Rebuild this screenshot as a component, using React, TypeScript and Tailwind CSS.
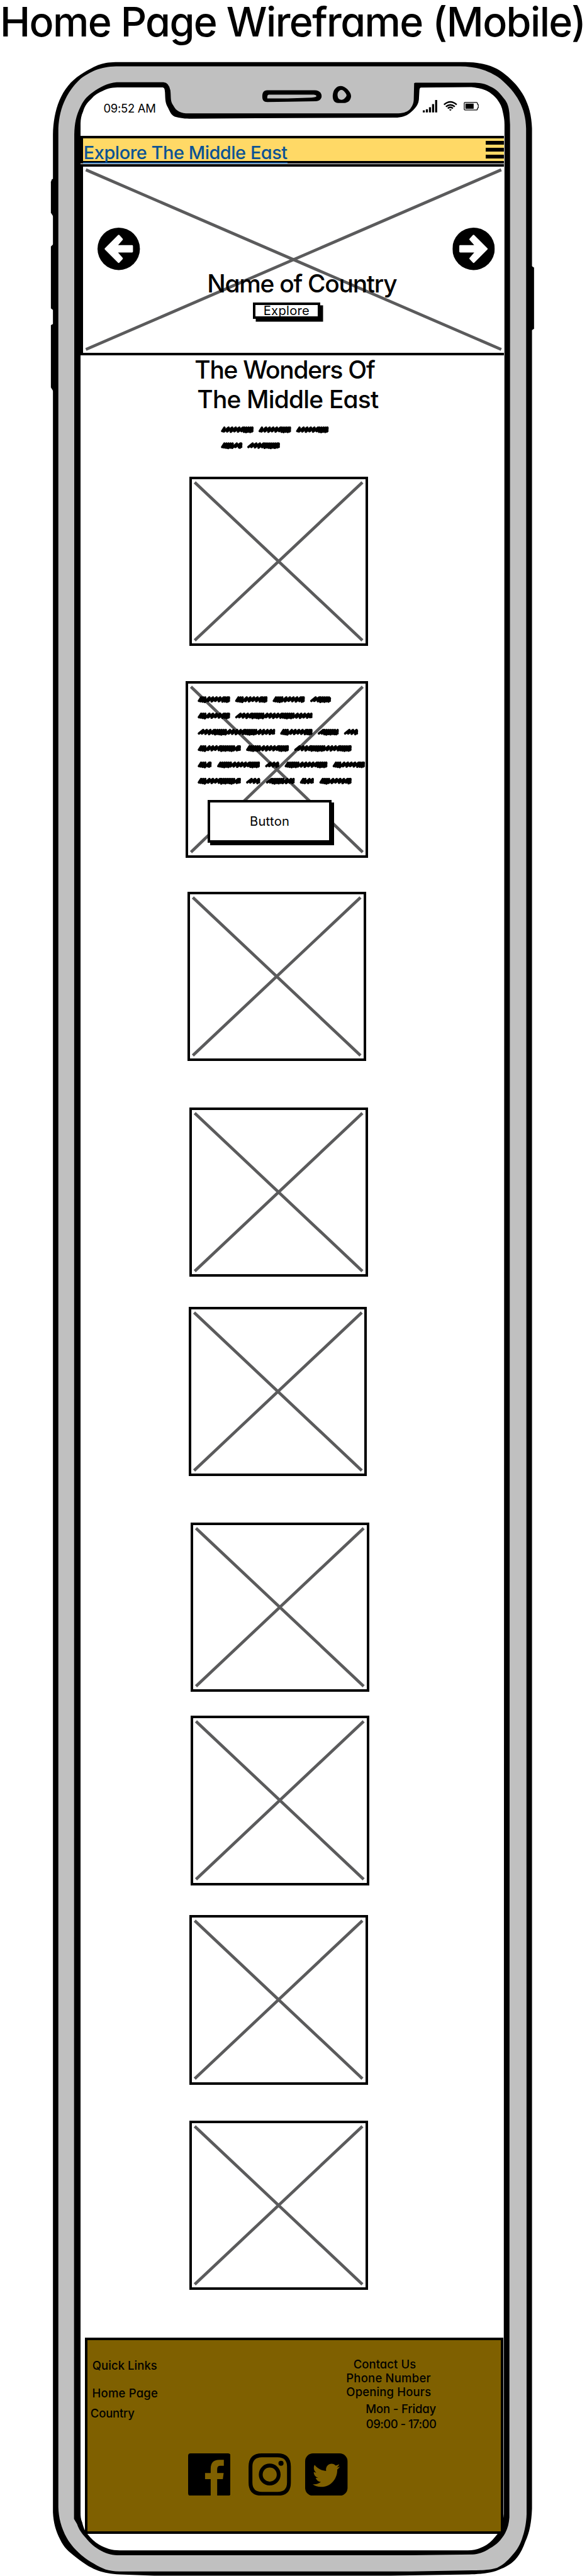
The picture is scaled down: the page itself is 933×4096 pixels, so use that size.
import type { ReactNode } from "react";

const INK = "#000000";

function PhoneFrame() {
  return (
    <svg
      className="absolute inset-0 h-[4096px] w-[933px]"
      viewBox="0 0 1142 5014"
      preserveAspectRatio="none"
      aria-hidden="true"
    >
      {/* side keys */}
      <path d="M104 348 L101 349 L99 354 V414 L104 422 Z" fill={INK} />
      <path d="M104 475 L99 480 V600 L104 604 Z" fill={INK} />
      <path d="M104 630 L99 633 V754 L104 762 Z" fill={INK} />
      <path d="M1033 517 L1039 521 V640 L1033 644 Z" fill={INK} />
      {/* shell */}
      <path
        d="M103 262 C104 215 118 170 157 145 C190 125 200 121 230 121 H905 C940 121 965 130 983 145 C1012 168 1034 200 1035 250 V4883 C1034 4910 1030 4930 1022 4947 C1012 4975 1000 4990 975 5000 C955 5010 930 5010 913 5011 L760 5013.5 H300 L233 5011 C200 5009 180 5002 155 4983 C135 4968 125 4960 117 4943 C108 4925 104 4910 103 4890 Z"
        fill={INK}
      />
      <path
        d="M113.5 257 C113.5 215 128 180 157 153 C180 136 200 129 232 129 H895 C930 129 955 140 973 153 C1005 180 1023 210 1023.5 250 L1024.5 4893 C1024 4910 1021 4925 1017 4937 C1013 4952 1005 4965 997 4973 C988 4984 978 4993 967 4998 C955 5002 935 5003 917 5003 L800 5005 H233 C210 5005 198 4999 183 4990 C160 4978 140 4958 130 4940 C119 4920 114 4900 113.5 4880 Z"
        fill="#c0c0c0"
      />
      {/* screen outline with notch */}
      <path
        d="M144.5 262 C145 240 148 225 157 207 C164 192 172 186 180 180 C195 169 208 162 227 160 H318 Q329 161 331.5 176 C333 190 331 197 337 205 C343 217 352 220.7 367 220.7 H775 C787 220 793 217 798 212 C804 204 805 199 805 191 L805.7 162 L808 161 H920 C935 161 943 163 953 168 C966 173 973 182 983 195 C989 204 990 212 991 220 L992.3 243 V600 L991 4900 C990 4912 988 4921 983 4930 C976 4943 965 4954 953 4960 C943 4967 930 4972 920 4972 L800 4973.7 H233 C220 4973.7 208 4971 197 4965 C185 4959 175 4950 167 4940 C159 4931 153 4923 150 4913 L144 4903 Z"
        fill={INK}
      />
      <path
        d="M156.7 240 C157 232 158 225 161.7 217 C164 208 169 200 177 193 C184 185 192 180 200 177 C210 171 220 170 233 170 H315 C320 170 320.5 173 321 180 C321.7 193 321 200 327 210 C332 221 334 224 340 227 C350 230 360 231 373 231 L500 230 L773 229 C785 228 792 225 800 218 C811 208 814 202 815 193 L816 175 Q816.5 170.7 819 170.5 L917 169.5 C930 171 935 172 943 175 C953 179 960 185 967 193 C973 201 977 209 978 217 C981 230 981.5 235 981.5 243 L980 4893 C979 4910 975 4923 968 4932 C962 4940 955 4948 947 4953 C935 4960 925 4964 910 4964 H233 C218 4964 205 4960 193 4953 C184 4948 177 4941 170 4932 C164 4925 162 4918 160 4910 C157 4903 156.7 4897 156.7 4890 Z"
        fill="#ffffff"
      />
      {/* speaker and camera */}
      <path
        fillRule="evenodd"
        fill={INK}
        d="M520 175.7 H612 C620 175.7 625.7 180 625.7 187 C625.7 193 621 197 613 197 L560 198 L520 198.7 C513 198.7 510.3 195 510.3 188 C510.3 180 513 176 520 175.7 Z M523 184.3 C520 185 520 187 520 191.5 L560 191.5 L606 190 C613 189.500 615.500 188.500 615.500 187 C615.500 185 612 184.300 607 184.300 Z"
      />
      <path
        fillRule="evenodd"
        fill={INK}
        d="M652 173 C658 165 668 166 675 173 C681 179 683 183 683 188 C682 196 677 200 670 200.500 H658 C650 200 647 194 647.300 186 C648 180 649 176 652 173 Z M660 177 C665 173 668 176 672 181 C676 186 674 188 670 192 C667 195.500 660 194.500 658 191 C656 186 656 180 660 177 Z"
      />
    </svg>
  );
}

function StatusIcons() {
  return (
    <svg className="h-[20px] w-[89px]" viewBox="786 255 327 73" aria-hidden="true">
      <path d="M786 315h12v12h-12z M804 309h12v18h-12z M822 297h12v30h-12z M840 279h12v48h-12z M858 255h12v72h-12z" />
      <g fill="none" stroke={INK} strokeWidth="9">
        <path d="M910 282 Q947 250 984 282" />
        <path d="M921 294 Q947 272 973 294" />
        <path d="M932 304 Q947 291 962 304" />
      </g>
      <path d="M939 311 Q947 306 955 311 L947 318 Z" />
      <path
        d="M1032 269 H1100 Q1104 269 1105 274 V279 L1110 282 V300 L1105 303 V309 Q1104 313 1100 313 H1032 Q1028 313 1028 309 V273 Q1028 269 1032 269 Z"
        fill="none"
        stroke={INK}
        strokeWidth="4.5"
      />
      <path d="M1035 276h48v30h-48z" />
    </svg>
  );
}

function ArrowDisc({ flip = false }: { flip?: boolean }) {
  return (
    <svg
      className={flip ? "size-[67.4px] -scale-x-100" : "size-[67.4px]"}
      viewBox="0 0 248 248"
      aria-hidden="true"
    >
      <circle cx="124" cy="124" r="124" />
      <path
        d="M47 124 L124 47 L143 68 L108 108 H202 V140 H108 L143 180 L124 201 Z"
        fill="#fff"
        stroke="#fff"
        strokeWidth="11"
        strokeLinejoin="round"
      />
    </svg>
  );
}

function Cross({ w, h }: { w: number; h: number }) {
  return (
    <svg
      className="absolute inset-0 size-full"
      viewBox={`0 0 ${w} ${h}`}
      preserveAspectRatio="none"
      aria-hidden="true"
    >
      <path
        d={`M4.500 5 L${w - 4.5} ${h - 5} M${w - 4.5} 5 L4.500 ${h - 5}`}
        stroke="#5b5b5c"
        strokeWidth="4.700"
      />
    </svg>
  );
}

function scribblePath(x0: number, x1: number, y: number) {
  const end = x1 - 8;
  let x = x0 + 8;
  let i = 0;
  let d = `M${x} ${y + 7}`;
  while (x < end - 8) {
    const dense = Math.sin((x - x0) / 28 + (x1 - x0) * 0.7) > 0.1;
    const top = y - 13 + ((i * 5) % 5);
    const low = y + 7 + ((i * 7) % 5) + (dense ? 2 : 0);
    x += Math.min(dense ? 13 : 25, end - x);
    d += ` L${x} ${top} L${x - (dense ? 3 : 8)} ${low}`;
    x -= dense ? 1 : 4;
    i += 1;
  }
  return `${d} L${end} ${y - 8} L${end - 2} ${y + 6} H${end}`;
}

function Scribbles({
  rows,
  pitch,
  className,
}: {
  rows: [number, number][][];
  pitch: number;
  className: string;
}) {
  return (
    <svg className={className} viewBox={`0 0 980 ${pitch * rows.length}`} aria-hidden="true">
      {rows.map((row, r) =>
        row.map(([a, b]) => (
          <path
            key={`${r}-${a}`}
            d={scribblePath(a, b, r * pitch + 24)}
            fill="none"
            stroke={INK}
            strokeWidth="14"
            strokeLinecap="round"
            strokeLinejoin="round"
          />
        )),
      )}
    </svg>
  );
}

const introRows: [number, number][][] = [
  [[0, 192], [219, 411], [438, 630]],
  [[0, 127], [153, 346]],
];

const cardRows: [number, number][][] = [
  [[0, 191], [218, 409], [437, 627], [656, 780]],
  [[0, 191], [218, 672]],
  [[0, 454], [481, 672], [700, 825], [853, 938]],
  [[0, 254], [282, 534], [563, 900]],
  [[0, 83], [113, 365], [393, 478], [507, 759], [787, 978]],
  [[0, 254], [282, 367], [398, 568], [596, 680], [710, 900]],
];

function ImageBox({ className }: { className: string }) {
  return (
    <div className={`relative h-[269.2px] w-[283.5px] border-4 border-black ${className}`}>
      <Cross w={275.5} h={261.2} />
    </div>
  );
}

function SketchButton({ className, children }: { className: string; children: ReactNode }) {
  return (
    <button
      className={`relative flex items-center justify-center border-4 border-black bg-white text-[20.2px] leading-none tracking-[0.25px] ${className}`}
    >
      {children}
    </button>
  );
}

function FacebookMark() {
  return (
    <svg className="size-[67.4px]" viewBox="0 0 248 248" aria-hidden="true">
      <path d="M14 0 H234 Q248 0 248 14 V234 Q248 248 234 248 H170 V151 H203 L208 115 H170 V92 Q170 73 188 73 H209 V38 H182 Q132 38 132 90 V115 H99 V151 H132 V248 H14 Q0 248 0 234 V14 Q0 0 14 0 Z" />
    </svg>
  );
}

function InstagramMark() {
  return (
    <svg className="size-[67.4px]" viewBox="0 0 248 248" fill="none" stroke={INK} strokeWidth="22.500" aria-hidden="true">
      <path d="M78 11.500 H170 Q236.500 11.500 236.500 78 V170 Q236.500 236.500 170 236.500 H78 Q11.500 236.500 11.500 170 V78 Q11.500 11.500 78 11.500 Z" />
      <circle cx="124" cy="124" r="52.500" />
      <circle cx="190" cy="58" r="15" fill={INK} stroke="none" />
    </svg>
  );
}

function TwitterMark() {
  return (
    <svg className="size-[67.4px]" viewBox="0 0 248 248" aria-hidden="true">
      <rect width="248" height="248" rx="46" />
      <path
        transform="translate(44 45.500) scale(.3125 .325)"
        fill="#7f6000"
        d="M459.370 151.716c.325 4.548.325 9.097.325 13.645 0 138.720-105.583 298.558-298.558 298.558-59.452 0-114.680-17.219-161.137-47.106 8.447.974 16.568 1.299 25.340 1.299 49.055 0 94.213-16.568 130.274-44.832-46.132-.975-84.792-31.188-98.112-72.772 6.498.974 12.995 1.624 19.818 1.624 9.421 0 18.843-1.300 27.614-3.573-48.081-9.747-84.143-51.980-84.143-102.985v-1.299c13.969 7.797 30.214 12.670 47.431 13.319-28.264-18.843-46.781-51.005-46.781-87.391 0-19.492 5.197-37.360 14.294-52.954 51.655 63.675 129.300 105.258 216.365 109.807-1.624-7.797-2.599-15.918-2.599-24.040 0-57.828 46.782-104.934 104.934-104.934 30.213 0 57.502 12.670 76.670 33.137 23.715-4.548 46.456-13.320 66.599-25.340-7.798 24.366-24.366 44.833-46.132 57.827 21.117-2.273 41.584-8.122 60.426-16.243-14.292 20.791-32.161 39.308-52.628 54.253z"
      />
    </svg>
  );
}

export default function App() {
  return (
    <div className="relative h-[4096px] w-[933px] overflow-hidden bg-white font-['Inter','Open_Sans',sans-serif] text-black [font-feature-settings:'cv11']">
      <PhoneFrame />

      <div className="relative">
        <div className="flex h-[215.7px] flex-col pt-[3px]">
          <h1 className="text-[64.6px] leading-none font-medium tracking-[-1.6px] whitespace-nowrap">
            Home Page Wireframe (Mobile)
          </h1>
          <div className="mt-[91px] flex justify-between pr-[172px] pl-[164.5px]">
            <span className="mt-[4.500px] text-[18.4px] leading-none tracking-[-0.25px]">09:52 AM</span>
            <StatusIcons />
          </div>
        </div>

        <main className="ml-[128.3px] w-[673.2px]">
          <header className="flex h-[44.3px] items-start justify-between border-y-4 border-l-4 border-black bg-[#ffd966]">
            <a className="mt-[8.4px] ml-[-0.5px] h-[31.7px] border-b-[2.500px] border-[#0b5394] pt-[0.600px] pl-[1px] text-[28.9px] leading-none font-medium tracking-[-0.45px] whitespace-nowrap text-[#0b5394]">
              Explore The Middle East
            </a>
            <div className="mt-[4.500px] flex w-[29.5px] flex-col gap-[5.200px]">
              <span className="h-[5.700px] bg-black" />
              <span className="h-[5.700px] bg-black" />
              <span className="h-[5.700px] bg-black" />
            </div>
          </header>

          <section className="relative mt-[1.400px] h-[303.7px] border-y-4 border-l-4 border-black bg-white">
            <Cross w={669.2} h={295.7} />
            <div className="relative flex justify-between pt-[96.800px] pr-[15px] pl-[23px]">
              <ArrowDisc />
              <ArrowDisc flip />
            </div>
            <h2 className="relative mt-[2.900px] ml-[197px] text-[38.9px] leading-none font-medium tracking-[-1.26px] whitespace-nowrap">
              Name of Country
            </h2>
            <SketchButton className="mt-[9.500px] ml-[269.300px] h-[26px] w-[107.6px] shadow-[4.500px_4.500px_0_#000]">
              Explore
            </SketchButton>
          </section>

          <h2 className="text-[38.9px] leading-[46.7px] font-medium whitespace-nowrap">
            <span className="ml-[181px] block tracking-[-1.26px]">The Wonders Of</span>
            <span className="ml-[185px] block tracking-[-0.8px]">The Middle East</span>
          </h2>

          <Scribbles
            rows={introRows}
            pitch={93}
            className="mt-[18.500px] ml-[223px] h-[50.7px] w-[267px]"
          />

          <ImageBox className="mt-[30.200px] ml-[173.2px]" />

          <article className="relative mt-[55.900px] ml-[166.7px] h-[281px] w-[290px] border-4 border-black">
            <Cross w={282} h={273} />
            <Scribbles
              rows={cardRows}
              pitch={95.2}
              className="relative mt-[19.500px] ml-[15.500px] h-[155.600px] w-[267px]"
            />
            <SketchButton className="mt-[9.900px] ml-[31px] h-[68px] w-[197.2px] shadow-[4px_4px_0_#000]">
              Button
            </SketchButton>
          </article>

          <ImageBox className="mt-[54px] ml-[169.900px]" />
          <ImageBox className="mt-[74px] ml-[173.2px]" />
          <ImageBox className="mt-[47.700px] ml-[171.500px]" />
          <ImageBox className="mt-[74px] ml-[174.800px]" />
          <ImageBox className="mt-[38px] ml-[174.800px]" />
          <ImageBox className="mt-[47.800px] ml-[173.2px]" />
          <ImageBox className="mt-[57.600px] ml-[173.2px]" />

          <footer className="mt-[76.100px] ml-[6.500px] h-[312px] w-[665px] border-4 border-black bg-[#7f6000] text-[18.5px] leading-none font-medium">
            <div className="flex h-[179.400px] justify-between">
              <nav className="flex flex-col items-start pt-[31px]">
                <a className="ml-[8px] tracking-[0.05px]">Quick Links</a>
                <a className="mt-[25.500px] ml-[7.800px] tracking-[0.2px]">Home Page</a>
                <a className="mt-[12.800px] ml-[5px] tracking-[-0.2px]">Country</a>
              </nav>
              <address className="flex w-[245.500px] flex-col items-start pt-[28.100px] not-italic">
                <span className="ml-[11.400px] tracking-[0.05px]">Contact Us</span>
                <span className="mt-[4.100px] tracking-[0.2px]">Phone Number</span>
                <span className="mt-[3.200px] tracking-[0.15px]">Opening Hours</span>
                <span className="mt-[8.800px] ml-[31px] tracking-[-0.15px]">Mon - Friday</span>
                <span className="mt-[5.400px] ml-[31.500px] tracking-[-0.55px]">09:00 - 17:00</span>
              </address>
            </div>
            <div className="flex pl-[160.200px]">
              <FacebookMark />
              <span className="w-[29px]" />
              <InstagramMark />
              <span className="w-[22.500px]" />
              <TwitterMark />
            </div>
          </footer>
        </main>
      </div>
    </div>
  );
}
